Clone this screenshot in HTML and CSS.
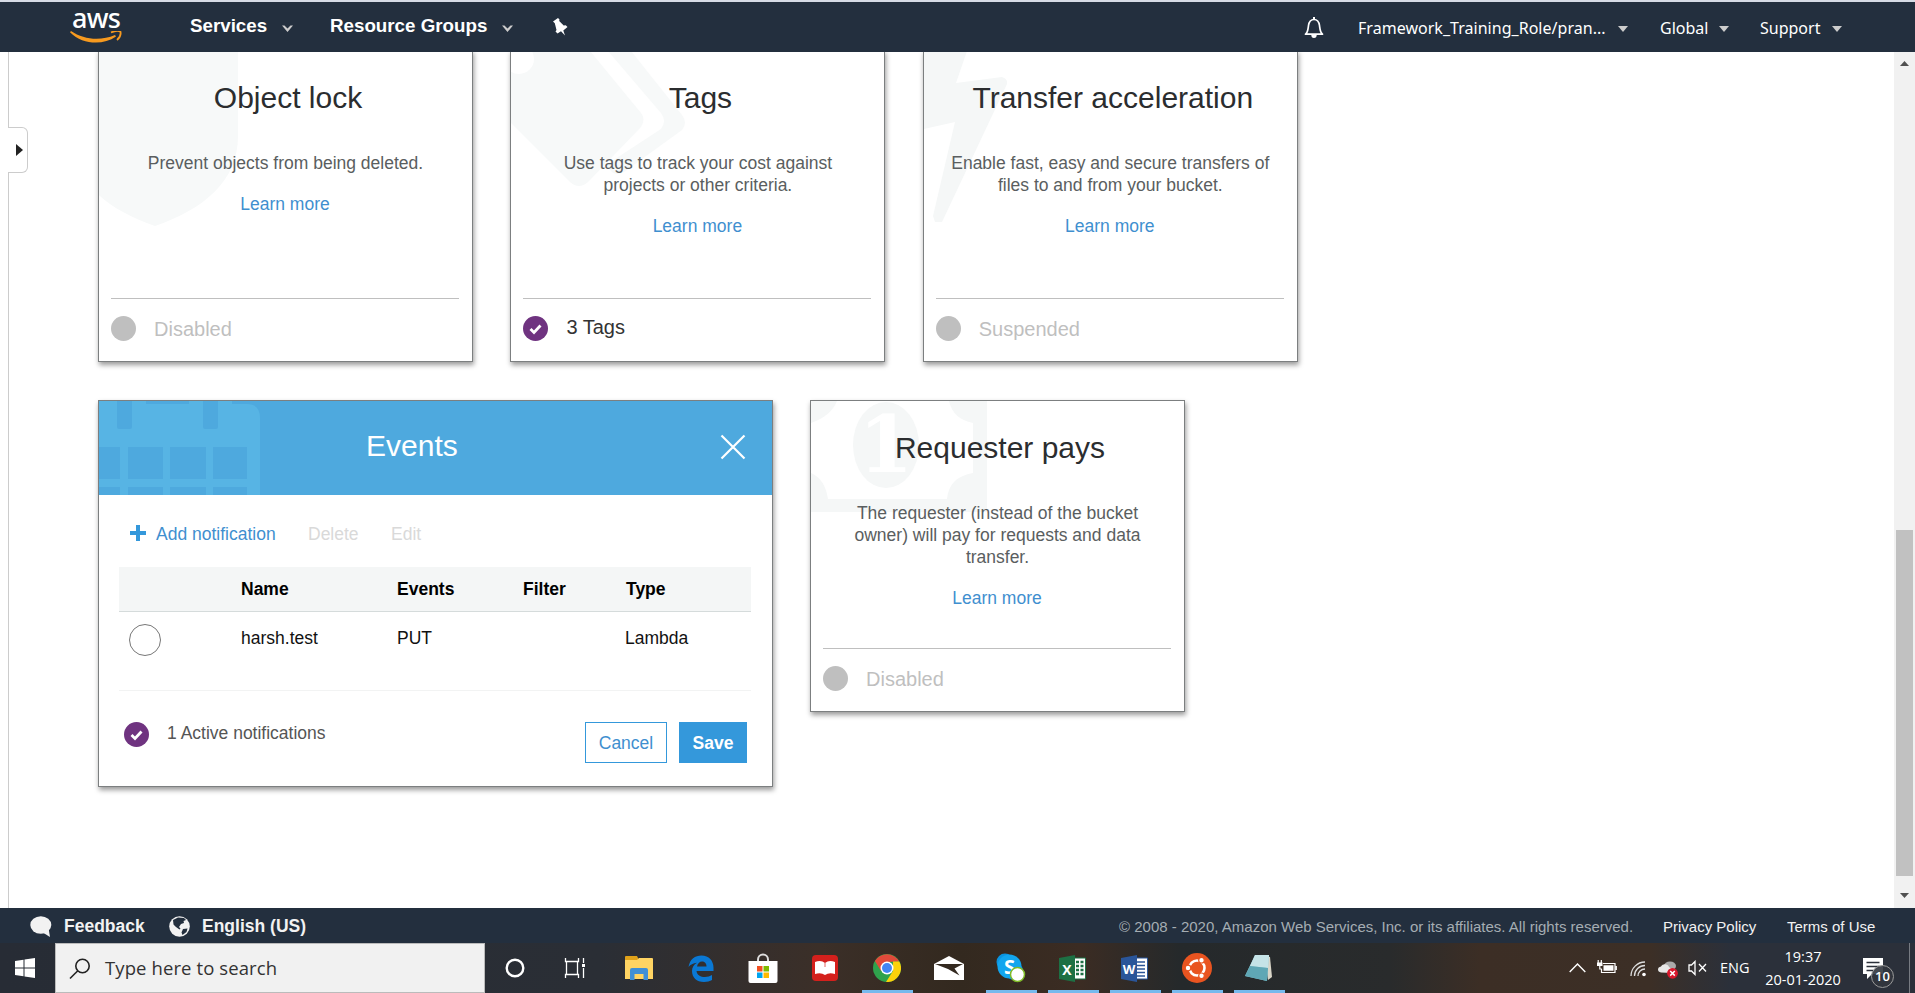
FILE: index.html
```html
<!DOCTYPE html>
<html lang="en">
<head>
<meta charset="utf-8">
<title>S3 Management Console</title>
<link rel="stylesheet" href="styles.css">
</head>
<body>
<header class="nav">
  <div class="logo">
    <span class="logo-text">aws</span>
    <svg class="logo-smile" width="52" height="15" viewBox="0 0 52 15"><path d="M1 0C14 9 31 10 45 4l1 1.500C33 14.500 13 14 0 1.200z" fill="#f79a1f"/><path d="M41 1.500C45-.2 49-.2 50.500.800C51 3.500 49.500 7 47 9" fill="none" stroke="#f79a1f" stroke-width="1.800"/></svg>
  </div>
  <span class="nav-main services">Services</span>
  <svg class="chev" width="11" height="9" viewBox="0 0 11 9"><path d="M0 1.500h2.500L5.500 4.500 8.500 1.500H11L5.500 8z" fill="#ccc"/></svg>
  <span class="nav-main groups">Resource Groups</span>
  <svg class="chev" width="11" height="9" viewBox="0 0 11 9"><path d="M0 1.500h2.500L5.500 4.500 8.500 1.500H11L5.500 8z" fill="#ccc"/></svg>
  <svg class="pin" width="16" height="18" viewBox="0 0 16 18"><path d="M1 3.500 6 0l1.500 1.500L7.200 3l4.500 4.500 2-.3L15.500 9l-4.200 3.600L13 17.500 9 13.200 5.500 15.500 3.500 13.500 4.500 12 2.800 5.200z" fill="#fff"/></svg>
  <svg class="bell" width="20" height="22" viewBox="0 0 20 22"><path d="M1.500 17.200C4 15.500 4 12 4.500 8.500C5 5 7 2.500 10 2.500S15 5 15.500 8.500C16 12 16 15.500 18.500 17.200Z" fill="none" stroke="#fff" stroke-width="1.700" stroke-linejoin="round"/><path d="M9 0h2v3H9zM7.300 18h5.400a2.700 3 0 0 1-5.400 0z" fill="#fff"/></svg>
  <span class="nav-side account">Framework_Training_Role/pran...</span>
  <svg class="tri" width="10" height="7" viewBox="0 0 10 7"><path d="M0 0h10L5 6z" fill="#ccc"/></svg>
  <span class="nav-side global">Global</span>
  <svg class="tri" width="10" height="7" viewBox="0 0 10 7"><path d="M0 0h10L5 6z" fill="#ccc"/></svg>
  <span class="nav-side support">Support</span>
  <svg class="tri" width="10" height="7" viewBox="0 0 10 7"><path d="M0 0h10L5 6z" fill="#ccc"/></svg>
</header>

<main class="content">
  <aside class="rail"><button class="rail-tab" aria-label="Expand"></button></aside>
  <div class="board">
    <div class="row row-top">
      <section class="card">
        <svg class="mark" width="373" height="310"><path d="M-27 0H139V85C139 130 105 158 56 175C7 158-27 130-27 85Z" fill="#f7f9f9"/></svg>
        <h2>Object lock</h2>
        <p>Prevent objects from being deleted.</p>
        <a>Learn more</a>
        <div class="status off"><i class="dot"></i>Disabled</div>
      </section>
      <section class="card">
        <svg class="mark" width="373" height="310"><path d="M0 0H79L130 62Q135 68 130 76L77 131Q68 139 59 131L0 72Z" fill="#f7f9f9"/><circle cx="8" cy="8" r="15" fill="#fff"/><path d="M97 0L150 62Q156 70 150 78L95 114L101 121Q106 125 113 121L171 79Q177 72 171 64L120 0Z" fill="#f7f9f9"/></svg>
        <h2>Tags</h2>
        <p>Use tags to track your cost against projects or other criteria.</p>
        <a>Learn more</a>
        <div class="status on"><svg width="25" height="25" viewBox="0 0 25 25"><circle cx="12.500" cy="12.500" r="12.500" fill="#6f3380"/><path d="M7.500 13l3.500 3.500 6.500-7" fill="none" stroke="#fff" stroke-width="2.800"/></svg><span>3 Tags</span></div>
      </section>
      <section class="card">
        <svg class="mark" width="373" height="310"><path d="M0 0H43L32 32L78 26Q84 28 83 33L18 171H11L9 165L31 71L0 78Z" fill="#f5f7f7"/></svg>
        <h2>Transfer acceleration</h2>
        <p>Enable fast, easy and secure transfers of files to and from your bucket.</p>
        <a>Learn more</a>
        <div class="status off"><i class="dot"></i>Suspended</div>
      </section>
    </div>
    <div class="row">
      <section class="events">
        <div class="events-head">
          <svg class="mark" width="170" height="94"><path fill-rule="evenodd" fill="#57b4e4" d="M0 3H148Q161 3 161 17V94H0ZM0 46V78H21V46ZM29 46V78H64V46ZM71 46V78H107V46ZM114 46V78H148V46ZM0 86V94H21V86ZM29 86V94H64V86ZM71 86V94H107V86ZM114 86V94H148V86Z"/><path fill="#57b4e4" d="M0 0H47V3H0ZM90 0H133V3H90Z"/><path fill="#4ea9de" d="M18 0H33V26Q33 28 31 28H20Q18 28 18 26ZM104 0H119V26Q119 28 117 28H106Q104 28 104 26Z"/></svg>
          <h2>Events</h2>
          <svg class="close" width="26" height="26" viewBox="0 0 26 26"><path d="M1.500 1.500l23 23M24.500 1.500l-23 23" stroke="#fff" stroke-width="2.200"/></svg>
        </div>
        <div class="tools">
          <svg width="16" height="16" viewBox="0 0 16 16"><path d="M6 0h4v6h6v4h-6v6H6v-6H0V6h6z" fill="#3498db"/></svg>
          <a class="add">Add notification</a><span class="delete">Delete</span><span>Edit</span>
        </div>
        <div class="grid head"><i></i><b>Name</b><b>Events</b><b>Filter</b><b>Type</b></div>
        <div class="grid line"><i><i class="radio"></i></i><span>harsh.test</span><span>PUT</span><span></span><span class="kind">Lambda</span></div>
        <div class="events-foot">
          <svg width="25" height="25" viewBox="0 0 25 25"><circle cx="12.500" cy="12.500" r="12.500" fill="#6f3380"/><path d="M7.500 13l3.500 3.500 6.500-7" fill="none" stroke="#fff" stroke-width="2.800"/></svg>
          <span class="count">1 Active notifications</span>
          <button class="btn cancel">Cancel</button><button class="btn save">Save</button>
        </div>
      </section>
      <section class="card">
        <svg class="mark" width="373" height="310"><path fill-rule="evenodd" fill="#f5f7f7" d="M0 0H176V111H0ZM26 0Q20 15 0 22V72Q14 78 17 98H136Q138 76 162 72V22Q142 18 138 0Z"/><ellipse cx="75" cy="44" rx="33" ry="43" fill="#f5f7f7"/><text x="75" y="71" text-anchor="middle" class="one">1</text></svg>
        <h2>Requester pays</h2>
        <p class="narrow">The requester (instead of the bucket owner) will pay for requests and data transfer.</p>
        <a>Learn more</a>
        <div class="status off"><i class="dot"></i>Disabled</div>
      </section>
    </div>
  </div>
  <div class="scroll">
    <svg width="9" height="5" viewBox="0 0 9 5"><path d="M4.500 0L9 5H0z" fill="#505050"/></svg>
    <div class="thumb"></div>
    <svg width="9" height="5" viewBox="0 0 9 5"><path d="M0 0h9L4.500 5z" fill="#505050"/></svg>
  </div>
</main>

<footer class="foot">
  <svg class="bubble" width="22" height="21" viewBox="0 0 22 21"><ellipse cx="10.800" cy="9" rx="10.500" ry="8.700" fill="#f2f2f2"/><path d="M12 16l8 5-1.500-9z" fill="#f2f2f2"/></svg>
  <b class="fb">Feedback</b>
  <svg class="globe" width="21" height="21" viewBox="0 0 21 21"><circle cx="10.500" cy="10.500" r="10.300" fill="#f2f2f2"/><path d="M4 4l5-2.500 6 .5 2 2-2.500 1 .5 2-3 1-2 3 1.500 1.500-1 1L7 11 4.500 8.500zM14 13l4.500-.5-1 3.500-4 3-1-2.500z" fill="#232f3e"/></svg>
  <b class="lang">English (US)</b>
  <span class="copy">© 2008 - 2020, Amazon Web Services, Inc. or its affiliates. All rights reserved.</span>
  <span class="privacy">Privacy Policy</span>
  <span class="terms">Terms of Use</span>
</footer>

<div class="taskbar">
  <div class="start"><svg width="20" height="20" viewBox="0 0 20 20"><path d="M0 3l8.500-1.300V9.500H0zM9.500 1.500L20 0v9.500H9.500zM0 10.500h8.500v7.800L0 17zM9.500 10.500H20V20L9.500 18.500z" fill="#fff"/></svg></div>
  <div class="search"><svg width="22" height="22" viewBox="0 0 22 22"><circle cx="13.500" cy="8" r="6.700" fill="none" stroke="#222" stroke-width="1.600"/><path d="M8.800 12.800L1 20.500" stroke="#222" stroke-width="1.600"/></svg><span>Type here to search</span></div>
  <div class="apps">
    <div class="app"><svg width="22" height="22" viewBox="0 0 22 22"><circle cx="11" cy="11" r="8.300" fill="none" stroke="#fff" stroke-width="2.400"/></svg></div>
    <div class="app"><svg class="tasks" width="24" height="22" viewBox="0 0 24 22"><path d="M2.500 1v3.500h13V1M2.500 21v-3.500h13V21M3.500 4.500v13M14.500 4.500v13M20.500 1v5M20.500 11v10" fill="none" stroke="#fff" stroke-width="1.300"/><path d="M19 7h3v3h-3z" fill="#fff"/></svg></div>
    <div class="app"><svg width="28" height="24" viewBox="0 0 28 24"><path d="M0 1q0-1 1-1h11l2 4H0z" fill="#e0a21a"/><path d="M0 4h12l2-2h13q1 0 1 1v20H0z" fill="#ffd463"/><path d="M5 24V14q0-2 2-2h14q2 0 2 2v10h-4.500v-6h-9v6z" fill="#3f8fd6"/></svg></div>
    <div class="app"><svg width="26" height="27" viewBox="0 0 26 27"><path d="M.5 12C2 4 7 .5 13.500.5 21 .5 25.500 6 25.500 12.500V16H8.500c.5 4 4 6 8.500 6 2.500 0 5-.7 7-2v5c-2 1.200-5 2-8 2-7.500 0-12-4.500-12-11 0-3.500 1.800-6.500 5-8.200C5 8.500 2.500 9.500.5 12zM9 11.500h9.500C18.500 8 16.500 6.500 14 6.500S9.500 8.500 9 11.500z" fill="#0a78d4"/></svg></div>
    <div class="app"><svg width="30" height="30" viewBox="0 0 30 30"><path d="M10 9V6.500a5 5 0 0 1 10 0V9" fill="none" stroke="#ddd" stroke-width="2"/><path d="M.5 8h29v20q0 2-2 2h-25q-2 0-2-2z" fill="#fff"/><path d="M9 13h5.500v5.500H9z" fill="#f25022"/><path d="M15.500 13H21v5.500h-5.500z" fill="#7fba00"/><path d="M9 19.500h5.500V25H9z" fill="#00a4ef"/><path d="M15.500 19.500H21V25h-5.500z" fill="#ffb900"/></svg></div>
    <div class="app"><svg width="26" height="26" viewBox="0 0 26 26"><rect width="26" height="26" rx="4" fill="#d4201c"/><path d="M3 7q6-2.500 10 1 4-3.500 10-1v12q-6-2-10 1-4-3-10-1z" fill="#fff"/><path d="M13 8v4" stroke="#d4201c" stroke-width=".7"/></svg></div>
    <div class="app open"><svg width="28" height="28" viewBox="0 0 28 28"><circle cx="14" cy="14" r="14" fill="#2fa24c"/><path d="M1.900 7A14 14 0 0 1 26.100 7.500L14 8 8 17z" fill="#e04a3a"/><path d="M26.300 7.500A14 14 0 0 1 13 28L20 17V7.500z" fill="#fcd20a"/><circle cx="14" cy="14" r="6.500" fill="#fff"/><circle cx="14" cy="14" r="5" fill="#4285f4"/></svg></div>
    <div class="app"><svg width="30" height="24" viewBox="0 0 30 24"><path d="M0 8L15 0l15 8v16H0z" fill="#fff"/><path d="M1 8h28L20.500 12.500l5 7L14 13z" fill="#33291f"/></svg></div>
    <div class="app open"><svg width="30" height="30" viewBox="0 0 30 30"><circle cx="9" cy="9" r="8.500" fill="#0a94e0"/><circle cx="18" cy="18" r="9" fill="#0a94e0"/><circle cx="13.500" cy="13.500" r="12" fill="#12a5ee"/><text x="13.500" y="21" text-anchor="middle" class="glyph-s">S</text><circle cx="21.500" cy="21.500" r="7" fill="#fff" stroke="#7fba28" stroke-width="1.500"/></svg></div>
    <div class="app open"><svg width="28" height="27" viewBox="0 0 28 27"><path d="M14 3h12.500v21H14z" fill="#fff" stroke="#1d7044"/><path d="M17 7h3M21.500 7h3M17 11h3M21.500 11h3M17 15h3M21.500 15h3M17 19h3M21.500 19h3" stroke="#1d7044" stroke-width="2.500"/><path d="M0 3L16 0v27L0 24z" fill="#1d7044"/><text x="8" y="19.500" text-anchor="middle" class="glyph">X</text></svg></div>
    <div class="app open"><svg width="28" height="27" viewBox="0 0 28 27"><path d="M14 3h12.500v21H14z" fill="#fff" stroke="#2a5599"/><path d="M16 7h8M16 10.500h8M16 14h8M16 17.500h8M16 21h8" stroke="#2a5599" stroke-width="1.500"/><path d="M0 3L16 0v27L0 24z" fill="#2a5599"/><text x="8" y="19" text-anchor="middle" class="glyph glyph-w">W</text></svg></div>
    <div class="app open"><svg width="30" height="30" viewBox="0 0 30 30"><circle cx="15" cy="15" r="15" fill="#e95420"/><circle cx="15" cy="15" r="7.500" fill="none" stroke="#fff" stroke-width="2.600"/><g fill="#fff" stroke="#e95420" stroke-width="1.200"><circle cx="6" cy="15" r="2.800"/><circle cx="19.500" cy="7.200" r="2.800"/><circle cx="19.500" cy="22.800" r="2.800"/></g></svg></div>
    <div class="app open"><svg width="28" height="28" viewBox="0 0 28 28"><path d="M20 2l5 1 2 20-4 3z" fill="#d9d5c8"/><path d="M10 1h14l-2 26L0 22z" fill="#8cc8d3"/><path d="M10 1h14l-1 13L5 12z" fill="#c5e3e7"/><path d="M5 12l18 2-1 13L0 22z" fill="#5fa7b5"/></svg></div>
  </div>
  <div class="tray">
    <svg class="t-up" width="17" height="10" viewBox="0 0 17 10"><path d="M.7 9L8.500 1l7.800 8" fill="none" stroke="#fff" stroke-width="1.400"/></svg>
    <svg class="t-bat" width="20" height="16" viewBox="0 0 20 16"><path d="M6 3.500h12v9H4.500V9M19.300 6v4M1.200 0v3M4.300 0v3M2.800 6v3h2" fill="none" stroke="#fff" stroke-width="1.200"/><path d="M0 2.500h5.500V6H0zM6.500 5.200h10v5.600h-10z" fill="#fff"/></svg>
    <svg class="t-wifi" width="17" height="16" viewBox="0 0 17 16"><g fill="none" stroke="#ddd" stroke-width="1.300"><path d="M1 15A14 14 0 0 1 15 1M4.500 15A10.500 10.500 0 0 1 15 4.500M8 15a7 7 0 0 1 7-7"/></g><circle cx="14" cy="13.500" r="1.800" fill="#fff"/></svg>
    <svg class="t-cloud" width="20" height="18" viewBox="0 0 20 18"><ellipse cx="12" cy="5" rx="6" ry="4.500" fill="#aaa"/><path d="M3 11.500C-1 11-1 6 3 5.500 5 2 10 3 11 6l4 3v3z" fill="#e8e8e8"/><circle cx="14.500" cy="12.300" r="5.400" fill="#d8182c"/><path d="M12.200 10l4.600 4.600M16.800 10l-4.600 4.600" stroke="#fff" stroke-width="1.500"/></svg>
    <svg class="t-vol" width="19" height="16" viewBox="0 0 19 16"><path d="M1 5h2.500L7 1.500v13L3.500 11H1zM11 4l7 7.500M18 4l-7 7.500" fill="none" stroke="#fff" stroke-width="1.300"/></svg>
    <span class="t-lang">ENG</span>
    <div class="clock"><span>19:37</span><span class="date">20-01-2020</span></div>
    <div class="notes"><svg width="20" height="21" viewBox="0 0 20 21"><path d="M0 0h20v16H9l-5 5v-5H0z" fill="#fff"/><path d="M3.500 4.500h13M3.500 8.500h13M3.500 12.500h7" stroke="#2b303a" stroke-width="1.500"/></svg><span class="badge">10</span></div>
  </div>
</div>
</body>
</html>
```
FILE: styles.css
```css
* { box-sizing: border-box; }
body { margin: 0; width: 1915px; height: 993px; overflow: hidden; display: flex; flex-direction: column; background: #fff; font-family: "Liberation Sans", Arial, sans-serif; font-size: 17.5px; line-height: 22px; color: #111; }
svg { display: block; flex: none; }
h2, p { margin: 0; font-weight: 400; }
span, b, a { white-space: nowrap; }
i { font-style: normal; }

.nav { height: 52px; flex: none; border-top: 2px solid #d6dbe5; background: #232f3e; display: flex; align-items: flex-start; color: #fff; }
.logo { width: 52px; margin: 5px 0 0 70px; }
.logo-text { display: block; height: 22px; text-align: center; font: 500 27px/22px "Noto Sans", sans-serif; letter-spacing: -.8px; }
.logo-smile { margin-top: 2px; }
.nav-main { font-size: 18.75px; font-weight: 700; margin-top: 13px; }
.services { width: 78px; margin-left: 68px; }
.groups { width: 158px; margin-left: 37px; }
.chev { margin: 22px 0 0 14px; }
.pin { margin: 16px 0 0 39px; }
.bell { margin: 15px 0 0 736px; }
.nav-side { font: 16px/24px "Noto Sans", sans-serif; margin-top: 14px; }
.account { width: 249px; margin-left: 34px; letter-spacing: .03px; }
.tri { margin: 24px 0 0 11px; }
.global { width: 48px; margin-left: 32px; }
.support { width: 61px; margin-left: 31px; }

.content { height: 856px; flex: none; display: flex; overflow: hidden; }
.rail { width: 29px; padding-top: 75px; background: linear-gradient(#ccc, #ccc) 8px 0 / 1px 100% no-repeat; flex: none; }
.rail-tab { display: flex; align-items: center; width: 20px; height: 46px; margin: 0 0 0 8px; padding: 0 0 0 8px; background: #fff; border: 1px solid #ccc; border-left: 0; border-radius: 0 6px 6px 0; }
.rail-tab::before { content: ""; margin-top: -1px; border: 6px solid transparent; border-left: 7px solid #222; border-right: 0; }
.board { flex: 1; padding-left: 69px; }
.row { display: flex; gap: 37px; align-items: flex-start; }
.row-top { gap: 37.400px; margin: -2px 0 38px; }
.card, .events { position: relative; border: 1px solid #7c7f80; background: #fff; box-shadow: 1px 3px 5px rgba(0,0,0,.4); }
.card { width: 375px; height: 312px; display: flex; flex-direction: column; align-items: center; text-align: center; overflow: visible; }
.mark { position: absolute; left: 0; top: 0; overflow: hidden; }
.card h2, .card p, .card a, .status { position: relative; }
.card h2 { font-size: 30px; line-height: 34px; margin-top: 30px; padding-left: 5px; color: #2b2d2f; white-space: nowrap; }
.card p { width: 322px; margin: 37px 0 19px; color: #5a5e60; }
.card .narrow { width: 300px; }
.card a, .add { color: #3f8fcf; }
.card a { margin-left: -1px; }
.status { width: 348px; height: 63px; margin: auto 1px 0 0; border-top: 1px solid #bfbfbf; display: flex; align-items: center; gap: 18px; font-size: 20px; line-height: 24px; padding-bottom: 3px; }
.off { color: #bfbfbf; }
.on { color: #333; }
.on span { margin-top: -3px; }
.dot { width: 25px; height: 25px; border-radius: 50%; background: #bfbfbf; }
.one { font: 700 78px "DejaVu Serif", serif; fill: #fff; }

.events { width: 675px; height: 387px; }
.events-head { position: relative; height: 94px; background: #4ea9de; display: flex; align-items: flex-start; }
.events-head h2 { position: relative; width: 92px; margin: 28px 262px 0 267px; font-size: 30px; line-height: 34px; color: #fff; }
.close { margin-top: 33px; }
.tools { display: flex; align-items: center; height: 72px; padding: 6px 0 0 31px; color: #d9d9d9; }
.tools svg { margin-top: -2px; }
.add { width: 119px; margin: 0 33px 0 10px; }
.delete { width: 51px; margin-right: 32px; }
.grid { width: 632px; margin-left: 20px; display: grid; grid-template-columns: 122px 156px 126px 103px 1fr; }
.head { height: 45px; padding-top: 11px; background: #f4f6f6; border-bottom: 1px solid #d5dbdb; color: #000; }
.line { height: 79px; padding-top: 15px; border-bottom: 1px solid #f2f3f3; }
.kind { margin-left: -1px; }
.radio { display: block; width: 32px; height: 32px; margin: -3px 0 0 9.500px; border: 1px solid #777; border-radius: 50%; }
.events-foot { display: flex; align-items: flex-start; margin: 31px 25px 0; }
.count { width: 417px; margin: 0 1px 0 18px; color: #555; }
.btn { height: 41px; padding: 1px 0 0; font: 17.500px "Liberation Sans", sans-serif; border: 1px solid #3498db; }
.cancel { width: 82px; color: #3f8fcf; background: #fff; }
.save { width: 68px; margin-left: 12px; color: #fff; background: #3498db; font-weight: 700; }

.scroll { width: 21px; flex: none; background: #f1f1f1; display: flex; flex-direction: column; align-items: center; padding-top: 9px; }
.thumb { width: 17px; height: 346px; margin: 464px 0 17px; background: #c1c1c1; }

.foot { height: 35px; flex: none; background: #232f3e; color: #f2f2f2; display: flex; align-items: flex-start; line-height: 20px; padding-top: 8px; }
.bubble { margin-left: 30px; }
.fb { width: 81px; margin-left: 12px; }
.globe { margin-left: 24px; }
.lang { width: 104px; margin-left: 12px; }
.copy { width: 514px; margin-left: 813px; font-size: 15px; color: #a5adb3; }
.privacy { width: 94px; margin-left: 30px; font-size: 15px; }
.terms { margin-left: 30px; font-size: 15px; }
.copy, .privacy, .terms { margin-top: 1px; }

.taskbar { height: 50px; flex: none; display: flex; color: #fff; background: linear-gradient(90deg, #272c35 0, #2a2e35 600px, #3b2f28 820px, #33291f 960px, #3b2c23 1080px, #25292b 1180px, #292b2c 1390px, #3c2e25 1480px, #3c2f26 1650px, #2b303a 1730px, #2b303a 100%); }
.start { width: 55px; padding: 15px 0 0 15px; }
.search { width: 430px; height: 50px; display: flex; background: #f1f1f1; border: 1px solid #bbb; color: #333; font: 18.500px/26px "Open Sans", sans-serif; }
.search svg { margin: 14px 0 0 13px; }
.search span { margin: 11px 0 0 14px; letter-spacing: .1px; }
.apps { display: flex; margin-left: -1px; }
.app { width: 62px; height: 50px; padding: 0 5.500px; display: grid; place-items: center; }
.tasks { margin-left: -4px; }
.open { background: linear-gradient(#76b9ed, #76b9ed) center bottom / 51px 3px no-repeat; }
.glyph { font: 700 14px "Open Sans", sans-serif; fill: #fff; }
.glyph-w { font-size: 13px; }
.glyph-s { font: 700 20px "Open Sans", sans-serif; fill: #fff; }
.tray { display: flex; align-items: flex-start; flex: 1; font: 16px/22px "Open Sans", sans-serif; }
.t-up { margin: 20px 0 0 279px; }
.t-bat { margin: 17px 0 0 11px; }
.t-wifi { margin: 18px 0 0 13px; }
.t-cloud { margin: 18px 0 0 11px; }
.t-vol { margin: 17px 0 0 10px; }
.t-lang { width: 30px; margin: 14px 0 0 13px; font-size: 14.500px; }
.clock { width: 78px; margin: 2px 0 0 14px; display: flex; flex-direction: column; align-items: center; line-height: 23px; font-size: 14.500px; }
.notes { position: relative; flex: 1; height: 50px; margin: 0 5px 0 21px; padding-top: 15px; border-right: 1px solid #777b82; }
.badge { position: absolute; left: 8px; top: 22px; width: 23px; height: 23px; border: 1px solid #999; border-radius: 50%; background: rgba(50,54,62,.9); font: 600 13px/21px "Open Sans", sans-serif; text-align: center; }
```
